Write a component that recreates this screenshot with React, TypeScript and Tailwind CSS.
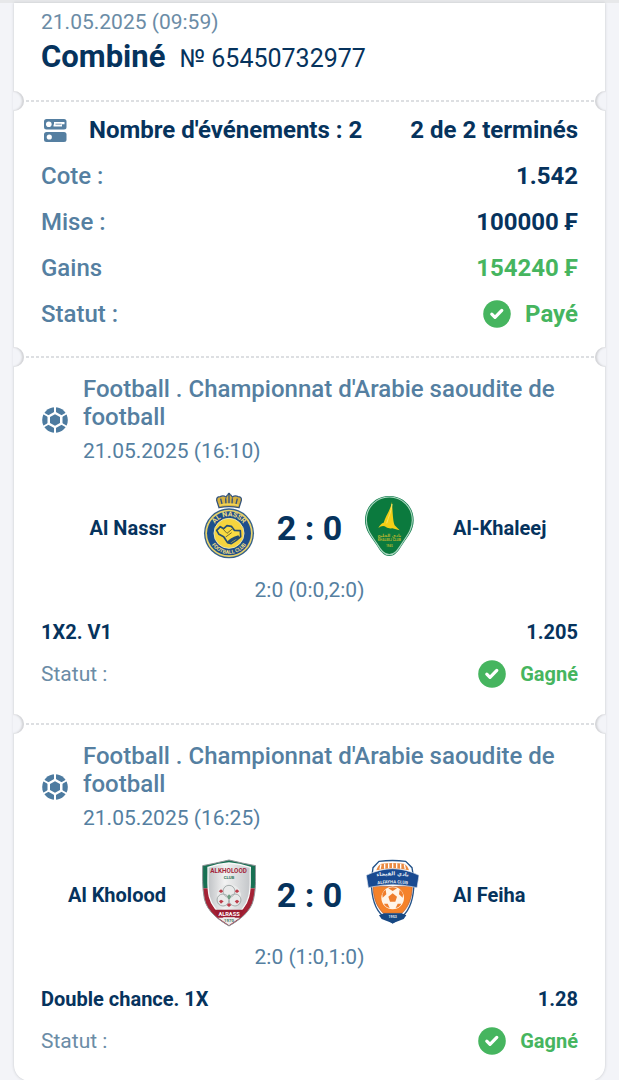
import React, { FC, ReactNode } from "react";

type Match = {
  date: string;
  home: string;
  away: string;
  homeLogo: ReactNode;
  awayLogo: ReactNode;
  score: string;
  periods: string;
  bet: string;
  odds: string;
};

const CheckIcon = () => (
  <svg className="size-7 shrink-0" viewBox="0 0 28 28" aria-hidden="true">
    <circle cx="14" cy="14" r="13.8" fill="#46b55f" />
    <path
      d="M8.8 14.2l3.2 3.2 6.8-7"
      fill="none"
      stroke="#fff"
      strokeWidth="3.2"
      strokeLinecap="round"
      strokeLinejoin="round"
    />
  </svg>
);

const EventsIcon = () => (
  <svg className="size-7 shrink-0" viewBox="0 0 28 28" aria-hidden="true">
    <rect x="3" y="3" width="22.5" height="10.5" rx="2.5" fill="#557fa1" />
    <rect x="3" y="16" width="22.5" height="10" rx="2.5" fill="#557fa1" />
    <circle cx="7.8" cy="8.2" r="2.8" fill="#fff" />
    <circle cx="8.3" cy="21" r="2.6" fill="#fff" />
    <path d="M13 6h10.5v2.2H21v2.2h-8.5V8.6H13z" fill="#fff" />
    <path d="M14.5 8.2h6" stroke="#557fa1" strokeWidth="0.8" />
  </svg>
);

const BallIcon = () => (
  <svg className="size-7 shrink-0" viewBox="-14 -14 28 28" aria-hidden="true">
    <circle r="12.8" fill="#4d7ba0" />
    {/* gaps between the outer panels */}
    <path d="M0 -14V14M-12.2 -7L12.2 7M-12.2 7L12.2 -7" stroke="#fff" strokeWidth="2" />
    <path d="M0 -8.6L7.5 -4.3V4.3L0 8.6L-7.5 4.3V-4.3Z" fill="#fff" />
    <path d="M0 -5.8L5 -2.9V2.9L0 5.8L-5 2.9V-2.9Z" fill="#4d7ba0" />
  </svg>
);

const AlNassrLogo = () => (
  <svg className="h-18 w-14 shrink-0" viewBox="30 36 168 216" role="img" aria-label="Al Nassr">
    <path
      d="M87 83L80 61Q79 50 91 50Q99 45 108 51Q112 43 117 43Q123 43 127 51Q136 45 144 50Q156 50 154 61L147 83Q117 77 87 83Z"
      fill="#d7b23f"
      stroke="#35547d"
      strokeWidth="4"
    />
    <path
      d="M97 76L92 56M108 74L107 55M126 74L127 55M137 76L142 56M117 73V46"
      stroke="#35547d"
      strokeWidth="4"
    />
    <path d="M89 76Q117 69 145 76" fill="none" stroke="#f3d458" strokeWidth="5" />
    <circle cx="117" cy="42" r="4" fill="#35547d" />
    <circle cx="117" cy="160" r="75" fill="#35608a" />
    <circle cx="117" cy="160" r="71" fill="#e9d36a" />
    <circle cx="117" cy="160" r="66" fill="#1d4f8c" />
    <circle cx="117" cy="160" r="45" fill="#f5d43e" stroke="#e6e3b0" strokeWidth="3" />
    <path
      d="M80 151L91 140L101 146L111 137L124 139L133 151L151 152L152 170L139 181L124 191L113 188L101 170L87 163Z"
      fill="#f8db42"
      stroke="#244d72"
      strokeWidth="5"
      strokeLinejoin="round"
    />
    <path d="M111 188Q117 174 145 166L150 174Q133 178 118 191Z" fill="#244d72" />
    <path d="M98 146L111 160L129 145M107 171L125 158" fill="none" stroke="#786f2e" strokeWidth="3" />
    <path id="nassr-top" d="M66 160A51 51 0 0 1 168 160" fill="none" />
    <path id="nassr-bottom" d="M55 160A62 62 0 0 0 179 160" fill="none" />
    <g fill="#efdd86" fontFamily="Roboto, sans-serif" fontWeight="700" textAnchor="middle">
      <text fontSize="21">
        <textPath href="#nassr-top" startOffset="50%">AL NASSR</textPath>
      </text>
      <text fontSize="16">
        <textPath href="#nassr-bottom" startOffset="50%">FOOTBALL CLUB</textPath>
      </text>
    </g>
  </svg>
);

const AlKhaleejLogo = () => (
  <svg className="h-18 w-14 shrink-0" viewBox="69 36 168 216" role="img" aria-label="Al-Khaleej">
    <path
      d="M148 48C106 48 75 80 75 121C75 151 92 169 108 193C122 215 131 228 148 228C165 228 174 215 188 193C204 169 221 151 221 121C221 80 190 48 148 48Z"
      fill="#0b7a48"
    />
    <path
      d="M148 51C108 51 79 82 79 121C79 149 95 167 110 190C124 212 132 224 148 224C164 224 172 212 186 190C201 167 217 149 217 121C217 82 188 51 148 51Z"
      fill="#0b7a3e"
      stroke="#a9d5bf"
      strokeWidth="3.5"
    />
    <path
      d="M156 66C151 91 136 109 131 128Q122 130 115 144Q125 136 134 139Q142 147 157 145L179 151L164 136C159 125 158 98 156 66Z"
      fill="#f3cf17"
    />
    <path d="M156 72C154 96 145 112 140 130" fill="none" stroke="#f9e464" strokeWidth="3" />
    <g fill="#b6b530" textAnchor="middle">
      <text x="148" y="170" fontFamily="'DejaVu Sans', sans-serif" fontWeight="700" fontSize="13">
        نادي الخليج
      </text>
      <text x="148" y="184" fontFamily="Roboto, sans-serif" fontWeight="700" fontSize="10">
        KHALEEJ CLUB
      </text>
      <text x="148" y="201" fontFamily="Roboto, sans-serif" fontWeight="700" fontSize="9">
        1945
      </text>
    </g>
  </svg>
);

const AlKholoodLogo = () => (
  <svg className="h-18 w-14 shrink-0" viewBox="30 27 168 216" role="img" aria-label="Al Kholood">
    <defs>
      <clipPath id="kholood-shield">
        <path d="M38 47Q76 40 117 30Q158 40 197 47C196 82 199 108 191 146C184 185 147 211 117 228C88 211 51 185 43 146C36 108 38 82 38 47Z" />
      </clipPath>
      <linearGradient id="kholood-silver">
        <stop offset="0" stopColor="#bfc2c5" />
        <stop offset="0.4" stopColor="#f3f3f3" />
        <stop offset="1" stopColor="#c3c6c9" />
      </linearGradient>
    </defs>
    <g clipPath="url(#kholood-shield)">
      <rect x="30" y="27" width="168" height="88" fill="#187053" />
      <rect x="30" y="115" width="168" height="120" fill="#a42235" />
      <path
        d="M54 52Q85 42 117 39Q150 42 181 52C179 91 184 108 176 140C169 172 143 195 117 214C91 195 65 172 58 140C51 108 55 91 54 52Z"
        fill="url(#kholood-silver)"
        stroke="#f7f7f7"
        strokeWidth="4"
      />
      <path d="M71 179H164L151 202H84Z" fill="#9b1c31" />
      <path d="M84 203H150L117 226Z" fill="#ececec" />
    </g>
    <path
      d="M38 47Q76 40 117 30Q158 40 197 47C196 82 199 108 191 146C184 185 147 211 117 228C88 211 51 185 43 146C36 108 38 82 38 47Z"
      fill="none"
      stroke="#8e9396"
      strokeWidth="3"
    />
    <g fill="none" stroke="#a6adad" strokeWidth="3">
      <circle cx="117" cy="138" r="36" fill="#e9eaea" stroke="none" />
      <circle cx="117" cy="124" r="18" />
      <circle cx="99" cy="150" r="18" />
      <circle cx="135" cy="150" r="18" />
    </g>
    <path d="M112 139L117 133L123 139L120 147H114Z" fill="#6d9e83" />
    <g fill="#bd3d4a">
      <path d="M93 118L100 124L93 129L86 124Z" />
      <path d="M141 118L148 124L141 129L134 124Z" />
      <path d="M93 149L101 154L93 161L87 154Z" />
      <path d="M141 149L148 154L141 161L134 154Z" />
      <path d="M117 159L124 165L117 171L110 165Z" />
    </g>
    <g fontFamily="Roboto, sans-serif" fontWeight="700" textAnchor="middle">
      <text x="116" y="68" fontSize="19" fill="#a3243a">ALKHOLOOD</text>
      <text x="117" y="87" fontSize="13" fill="#38785e">CLUB</text>
      <text x="117" y="197" fontSize="17" fill="#fff">ALRASS</text>
      <text x="117" y="215" fontSize="13" fill="#477a60">1970</text>
    </g>
  </svg>
);

const AlFeihaLogo = () => (
  <svg className="h-18 w-14 shrink-0" viewBox="69 27 168 216" role="img" aria-label="Al Feiha">
    <path
      d="M117 34Q158 29 197 34L216 53L222 92C222 135 215 175 187 199L158 219L130 199C100 175 94 135 94 92L99 53Z"
      fill="#fff"
      stroke="#245389"
      strokeWidth="4"
    />
    <path d="M109 61Q112 48 124 41Q158 37 192 41Q204 48 207 61Q158 50 109 61Z" fill="#ea8a42" />
    <path
      d="M123 43L120 58M134 41V56M146 40V55M158 40V55M170 40V55M182 41V56M193 43L196 58"
      stroke="#fff"
      strokeWidth="4"
    />
    <path
      d="M99 108Q158 112 217 108C216 142 208 168 186 190H130C108 168 100 142 99 108Z"
      fill="#f5822a"
      stroke="#a9552f"
      strokeWidth="2"
    />
    <circle cx="158" cy="144" r="34" fill="#fff4e8" />
    <g fill="#ef7d2c">
      <path d="M158 130L171 140L166 155H150L145 140Z" />
      <path d="M145 115Q158 108 171 115L158 123Z" />
      <path d="M127 133Q130 123 137 119L139 133L128 143Z" />
      <path d="M189 133Q186 123 179 119L177 133L188 143Z" />
      <path d="M132 161L143 161L149 174Q138 172 132 161Z" />
      <path d="M184 161L173 161L167 174Q178 172 184 161Z" />
    </g>
    <path
      d="M79 76Q120 56 158 56Q197 56 237 76L231 113L217 110Q158 98 99 110L85 113Z"
      fill="#194a91"
      stroke="#dce3ea"
      strokeWidth="2"
    />
    <path d="M117 196L132 190H185L199 196L191 207L158 220L125 207Z" fill="#174883" />
    <path id="feiha-arabic" d="M94 83Q158 69 222 83" fill="none" />
    <path id="feiha-latin" d="M91 107Q158 92 225 107" fill="none" />
    <g fill="#e7edf3" fontWeight="700" textAnchor="middle">
      <text fontFamily="'DejaVu Sans', sans-serif" fontSize="16">
        <textPath href="#feiha-arabic" startOffset="50%">نادي الفيحاء</textPath>
      </text>
      <text fontFamily="Roboto, sans-serif" fontSize="13">
        <textPath href="#feiha-latin" startOffset="50%">ALFAYHA CLUB</textPath>
      </text>
      <text x="158" y="205" fontFamily="Roboto, sans-serif" fontSize="11">1953</text>
    </g>
  </svg>
);

const matches: Match[] = [
  {
    date: "21.05.2025 (16:10)",
    home: "Al Nassr",
    away: "Al-Khaleej",
    homeLogo: <AlNassrLogo />,
    awayLogo: <AlKhaleejLogo />,
    score: "2 : 0",
    periods: "2:0 (0:0,2:0)",
    bet: "1X2. V1",
    odds: "1.205",
  },
  {
    date: "21.05.2025 (16:25)",
    home: "Al Kholood",
    away: "Al Feiha",
    homeLogo: <AlKholoodLogo />,
    awayLogo: <AlFeihaLogo />,
    score: "2 : 0",
    periods: "2:0 (1:0,1:0)",
    bet: "Double chance. 1X",
    odds: "1.28",
  },
];

// perforated line with a notch cut in each side of the ticket
const Divider = () => (
  <div className="-mx-px flex h-5 items-center">
    <div className="h-5 w-[11px] rounded-r-full bg-[#f3f4f8] shadow-[inset_-2px_0_2px_#d2d3d6]" />
    <div className="h-0.5 flex-1 bg-[repeating-linear-gradient(90deg,#fff_0_2px,#dddfe2_2px_5px)]" />
    <div className="h-5 w-[11px] rounded-l-full bg-[#f3f4f8] shadow-[inset_2px_0_2px_#d2d3d6]" />
  </div>
);

const SummaryRow: FC<{ label: string; children: ReactNode }> = ({ label, children }) => (
  <div className="flex h-9 items-center justify-between">
    <dt className="font-medium text-[#557fa1]">{label}</dt>
    <dd className="flex items-center gap-3.5 font-bold">{children}</dd>
  </div>
);

const MatchSection: FC<{ match: Match }> = ({ match }) => (
  <section className="px-[27px] pt-2 pb-[26px]">
    <div className="flex items-center gap-3.5">
      <BallIcon />
      <div className="text-[#557fa1]">
        <h2 className="text-2xl leading-7 font-medium">
          Football . Championnat d'Arabie saoudite de football
        </h2>
        <p className="mt-1.5 text-[21px] leading-7">{match.date}</p>
      </div>
    </div>
    <div className="mt-[27px] flex items-center">
      <p className="flex-1 text-right text-xl font-bold">{match.home}</p>
      <div className="ml-[34px]">{match.homeLogo}</div>
      <p className="w-[107px] text-center text-[34px] font-bold">{match.score}</p>
      <div className="mr-[34px]">{match.awayLogo}</div>
      <p className="flex-1 text-xl font-bold">{match.away}</p>
    </div>
    <p className="mt-3 text-center text-[21px] leading-7 text-[#557fa1]">{match.periods}</p>
    <div className="mt-3.5 flex justify-between text-xl leading-7 font-bold">
      <span>{match.bet}</span>
      <span>{match.odds}</span>
    </div>
    <div className="mt-3.5 flex items-center justify-between leading-7">
      <span className="text-[21px] text-[#6b8ca6]">Statut :</span>
      <span className="flex items-center gap-3.5 text-xl font-bold text-[#46b55f]">
        <CheckIcon />
        Gagné
      </span>
    </div>
  </section>
);

const App = () => {
  return (
    <div className="border-t-3 border-[#e7e8ea] bg-[#f3f4f8] px-3.5 font-['Roboto',sans-serif] text-[#06335d]">
      <main className="rounded-b-2xl bg-white shadow-[0_0_3px_#c3c5ca]">
        <header className="px-[27px] pt-[5px] pb-3">
          <p className="text-[21px] leading-7 text-[#6b8ca6]">21.05.2025 (09:59)</p>
          <div className="mt-px flex items-baseline gap-3.5 leading-10">
            <h1 className="text-[31px] font-bold">Combiné</h1>
            <p className="text-[25px]">№ 65450732977</p>
          </div>
        </header>
        <Divider />
        <section className="px-[27px] pt-px pb-[15px] text-2xl">
          <div className="flex h-9 items-center font-bold">
            <EventsIcon />
            <h2 className="ml-5 flex-1">Nombre d'événements : 2</h2>
            <p>2 de 2 terminés</p>
          </div>
          <dl className="mt-2.5 flex flex-col gap-2.5">
            <SummaryRow label="Cote :">1.542</SummaryRow>
            <SummaryRow label="Mise :">100000 ₣</SummaryRow>
            <SummaryRow label="Gains">
              <span className="text-[#46b55f]">154240 ₣</span>
            </SummaryRow>
            <SummaryRow label="Statut :">
              <CheckIcon />
              <span className="text-[#46b55f]">Payé</span>
            </SummaryRow>
          </dl>
        </section>
        {matches.map((match) => (
          <div key={match.date}>
            <Divider />
            <MatchSection match={match} />
          </div>
        ))}
      </main>
    </div>
  );
};

export default App;
